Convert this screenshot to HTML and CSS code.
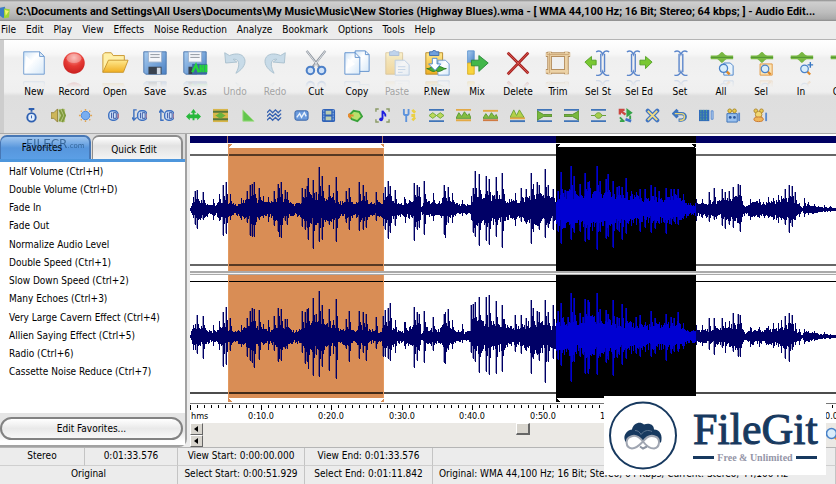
FILE: index.html
```html
<!DOCTYPE html>
<html lang="en">
<head>
<meta charset="utf-8">
<title>Audio Editor</title>
<link rel="stylesheet" href="styles.css">
</head>
<body>
<svg class="defs" aria-hidden="true">
  <defs>
    <linearGradient id="gBlue" x1="0" y1="0" x2="1" y2="1"><stop offset="0" stop-color="#a9cdf0"/><stop offset="1" stop-color="#4a80c4"/></linearGradient>
    <linearGradient id="gGold" x1="0" y1="0" x2="0" y2="1"><stop offset="0" stop-color="#ffe98e"/><stop offset="1" stop-color="#f0ae20"/></linearGradient>
    <linearGradient id="gPage" x1="0" y1="0" x2="1" y2="1"><stop offset="0" stop-color="#cfe4f8"/><stop offset=".4" stop-color="#fff"/><stop offset="1" stop-color="#d6e8f8"/></linearGradient>
    <radialGradient id="gRed" cx=".5" cy=".25" r=".8"><stop offset="0" stop-color="#f9a39c"/><stop offset=".5" stop-color="#e63a34"/><stop offset="1" stop-color="#c41c1c"/></radialGradient>
    <symbol id="floppy" viewBox="0 0 30 28">
      <path d="M3 2h24v24H5l-2-2z" fill="url(#gBlue)" stroke="#4b76ad"/>
      <path d="M8 2h14v11H8z" fill="#f5f7fa" stroke="#9fb3cc"/>
      <path d="M10 5h10M10 8h10" stroke="#8b929c"/>
      <path d="M8 18h14v8H8z" fill="#39424f"/><path d="M17 19h4v7h-4z" fill="#d4dbe4"/>
    </symbol>
    <symbol id="beam" viewBox="0 0 16 28">
      <path d="M1 2c4-2 6 0 7 3 1-3 3-5 7-3M1 27c4 1 6-1 7-4 1 3 3 5 7 4M6 4v20M10 4v20" fill="none" stroke="#5b86cb" stroke-width="1.500"/>
    </symbol>
    <symbol id="wave" viewBox="0 0 26 12">
      <path d="M1 4h6c3 0 4-3 6-4 2 1 3 4 6 4h6v4h-6c-3 0-4 3-6 4-2-1-3-4-6-4H1z" fill="#79b843"/><path d="M1 6h24" stroke="#4f9232"/>
    </symbol>
    <symbol id="lens" viewBox="0 0 16 16">
      <path d="M10 10l4 4" stroke="#e08a2c" stroke-width="3"/><circle cx="6.500" cy="6.500" r="5" fill="#d9edfb" stroke="#4a82c8" stroke-width="1.600"/>
    </symbol>
    <symbol id="clock" viewBox="0 0 16 16">
      <rect x="4" y="3" width="10" height="10" rx="4" fill="#cfe0f8" stroke="#3d70c0" stroke-width="1.500"/><path d="M7 5v6M9 5h3v6H9z" stroke="#3454a0" fill="none"/><path d="M14 6v5" stroke="#d66"/>
    </symbol>
    <symbol id="bars" viewBox="0 0 16 16">
      <path d="M0 2h16M0 14h16" stroke="#3f74b8" stroke-width="2"/>
    </symbol>
    <symbol id="clip" viewBox="0 0 30 28">
      <path d="M3 3h18v23H3z" fill="url(#gGold)" stroke="#b98b28"/><path d="M7 2h3c0-2 4-2 4 0h3v4H7z" fill="#6ea0de" stroke="#3c6cae"/>
    </symbol>
  </defs>
</svg>
<div class="app">
  <header class="titlebar">
    <svg class="app-icon" viewBox="0 0 16 16"><path d="M0 2l6-1 2 9-4 5-4-3z" fill="#3b7bc4"/><path d="M5 3l7 1-1 10-6 1z" fill="#9ed534"/><path d="M6 5l5 1-4 6z" fill="#f4f36a"/></svg>
    <h1>C:\Documents and Settings\All Users\Documents\My Music\Music\New Stories (Highway Blues).wma - [ WMA 44,100 Hz; 16 Bit; Stereo; 64 kbps; ] - Audio Edit...</h1>
  </header>
  <nav class="menubar">
    <button>File</button><button>Edit</button><button>Play</button><button>View</button><button>Effects</button><button>Noise Reduction</button><button>Analyze</button><button>Bookmark</button><button>Options</button><button>Tools</button><button>Help</button>
  </nav>
  <section class="toolbars">
    <div class="toolbar">
      <div class="group">
        <button><svg viewBox="0 0 30 28"><path d="M4 2h17l5 5v19H4z" fill="url(#gPage)" stroke="#6f9bd0"/><path d="M21 2v5h5z" fill="#e6f1fb" stroke="#6f9bd0"/><path d="M6 6l8 7-8 7z" fill="#fff"/></svg>New</button>
        <button><svg viewBox="0 0 30 28"><circle cx="15" cy="14" r="11.500" fill="url(#gRed)"/><ellipse cx="15" cy="9" rx="8" ry="5" fill="#fff" opacity=".3"/></svg>Record</button>
      </div>
      <div class="group">
        <button><svg viewBox="0 0 30 28"><path d="M2 24V5l2-2h7l2 3h12v5" fill="#fff0a8" stroke="#c8962e"/><path d="M2 24l6-13h21l-5 13z" fill="url(#gGold)" stroke="#c8962e"/></svg>Open</button>
        <button><svg viewBox="0 0 30 28"><use href="#floppy"/></svg>Save</button>
        <button><svg viewBox="0 0 30 28"><use href="#floppy"/><path d="M12 15h16v11H12z" fill="#3c66a4"/><path d="M12 24l4-8 3 8M21 16v8M24 24v-8M21 20h3M27 16v8" fill="none" stroke="#25d43a" stroke-width="2.500"/></svg>Sv.as</button>
        <button disabled><svg viewBox="0 0 30 28"><path d="M4 3l1 11 12-1-4-3c5-1 9 4 3 15 9-5 11-12 9-16C23 4 16 3 9 6z" fill="#c8dbe8" stroke="#a9bfcd"/></svg>Undo</button>
        <button disabled><svg viewBox="0 0 30 28"><path d="M26 3l-1 11-12-1 4-3c-5-1-9 4-3 15C5 20 3 13 5 9 7 4 14 3 21 6z" fill="#c8dbe8" stroke="#a9bfcd"/></svg>Redo</button>
      </div>
      <div class="group">
        <button><svg viewBox="0 0 30 28"><path d="M5 1l15 19M25 1L10 20" stroke="#8e959e" stroke-width="2.500"/><path d="M5 1l12 16M25 1L13 17" stroke="#e6e9ee"/><circle cx="9" cy="22" r="4" fill="#cfe1f7" stroke="#4d80c8" stroke-width="2.200"/><circle cx="21" cy="22" r="4" fill="#cfe1f7" stroke="#4d80c8" stroke-width="2.200"/></svg>Cut</button>
      </div>
      <div class="group">
        <button><svg viewBox="0 0 30 28"><path d="M13 1h11l4 4v18H13z" fill="url(#gPage)" stroke="#5f90cc"/><path d="M2 3h11l5 5v18H2z" fill="url(#gPage)" stroke="#5f90cc"/><path d="M13 3v5h5M24 1v4h4" fill="none" stroke="#5f90cc"/><path d="M5 9l8 6-8 5z" fill="#fff"/></svg>Copy</button>
        <button disabled><svg class="faded" viewBox="0 0 30 28"><use href="#clip"/><path d="M13 11h10l5 5v11H13z" fill="url(#gPage)" stroke="#6f9bd0"/><path d="M16 18h8M16 21h8M16 24h5" stroke="#7fa8d8"/></svg>Paste</button>
        <button><svg viewBox="0 0 30 28"><use href="#clip"/><path d="M16 11h8l4 4v12H16z" fill="url(#gPage)" stroke="#6f9bd0"/><path d="M4 20c6 0 6-5 10 0 4-5 6 0 11 0-5 1-7 5-11 2-4 3-6-1-10-2z" fill="#48ad35" stroke="#247a20"/><path d="M10 9h5v6h4l-6 7-7-7h4z" fill="#fff" stroke="#4c8bd2"/></svg>P.New</button>
        <button><svg viewBox="0 0 30 28"><path d="M5 1h7v13H5z" fill="url(#gBlue)" stroke="#5d93cf"/><path d="M5 14h7v12H5z" fill="#f8d53c" stroke="#d9ad22"/><path d="M9 11h8V6l10 8-10 9v-6H9z" fill="#42b74a" stroke="#2d8a3b"/></svg>Mix</button>
      </div>
      <div class="group">
        <button><svg viewBox="0 0 30 28"><path d="M4 3l22 22M26 3L4 26" stroke="#a52020" stroke-width="3"/><path d="M4 3l22 22M26 3L4 26" stroke="#dc5b50"/></svg>Delete</button>
        <button><svg viewBox="0 0 30 28"><path d="M2 5h26M2 23h24M6 2v24M24 2v24" stroke="#b58e5e" stroke-width="5"/><path d="M2 5h26M2 23h24M6 2v24M24 2v24" stroke="#ecd2a6" stroke-width="3"/><path d="M3 5h24M6 3v22" stroke="#c9a575"/></svg>Trim</button>
        <button><svg viewBox="0 0 30 28"><use href="#beam" x="12" width="16" height="28"/><path d="M1 13l7-6v4h5v5H8v4z" fill="#79c832" stroke="#54a125"/></svg>Sel St</button>
      </div>
      <div class="group">
        <button><svg viewBox="0 0 30 28"><use href="#beam" x="1" width="16" height="28"/><path d="M29 13l-7-6v4h-6v5h6v4z" fill="#79c832" stroke="#54a125"/></svg>Sel Ed</button>
      </div>
      <div class="group">
        <button><svg viewBox="0 0 30 28"><use href="#beam" x="8" width="16" height="28"/></svg>Set</button>
      </div>
      <div class="group">
        <button><svg viewBox="0 0 30 28"><use href="#wave" x="3" y="2" width="26" height="12"/><path d="M18 14h7l3 3v10H18z" fill="#e8f3fc" stroke="#4a82c8"/><use href="#lens" x="12" y="14" width="14" height="14"/></svg>All</button>
        <button><svg viewBox="0 0 30 28"><use href="#wave" x="3" y="2" width="26" height="12"/><path d="M14 15h13v12H14z" fill="#fbe3b3" stroke="#e09740"/><use href="#lens" x="14" y="15" width="13" height="13"/></svg>Sel</button>
        <button><svg viewBox="0 0 30 28"><use href="#wave" x="3" y="2" width="26" height="12"/><use href="#lens" x="13" y="15" width="14" height="13"/><path d="M25 13v6M22 16h6" stroke="#3a78c4" stroke-width="1.500"/></svg>In</button>
        <button><svg viewBox="0 0 30 28"><use href="#wave" x="3" y="2" width="26" height="12"/><use href="#lens" x="13" y="15" width="14" height="13"/></svg>Out</button>
      </div>
    </div>
    <div class="effects">
      <button aria-label="Timer"><svg viewBox="0 0 16 16"><path d="M8 1v3M5 1h6" stroke="#2d5fb0" stroke-width="2"/><circle cx="8" cy="10" r="4.500" fill="#e4effc" stroke="#2d5fb0" stroke-width="2"/><path d="M8 8v3" stroke="#2d5fb0"/></svg></button>
      <button aria-label="Volume"><svg viewBox="0 0 16 16"><path d="M0 5h3l4-4v14l-4-4H0z" fill="#cdb65a" stroke="#93833c"/><path d="M8 1h7v14H8z" fill="#b9c886"/><path d="M9 2l3 6-3 6M12 1l3 7-3 7" fill="none" stroke="#7f9a3c" stroke-width="2"/></svg></button>
      <button aria-label="Normalize"><svg viewBox="0 0 16 16"><circle cx="8" cy="8" r="4.500" fill="#79aef0" stroke="#4a84d4"/><path d="M8 1v2M8 13v2M1 8h2M13 8h2M3 3l1 1M12 12l1 1M13 3l-1 1M3 13l1-1" stroke="#e3a550" stroke-width="1.500"/></svg></button>
      <button aria-label="Duration"><svg viewBox="0 0 16 16"><use href="#clock"/></svg></button>
      <button aria-label="Slower"><svg viewBox="0 0 16 16"><use href="#clock" x="2"/><path d="M5 2H2v10M0 10l2 3 3-3" stroke="#3d70c0" stroke-width="1.500" fill="none"/></svg></button>
      <button aria-label="Faster"><svg viewBox="0 0 16 16"><use href="#clock" x="2"/><path d="M5 13H2V3M0 5l2-3 3 3" stroke="#3d70c0" stroke-width="1.500" fill="none"/></svg></button>
      <button aria-label="Expand"><svg viewBox="0 0 16 16"><path d="M8 1l3 4H9v2h3V5l4 4-4 4v-2H9v2H7v-2H4v2L0 9l4-4v2h3V5H5z" fill="#27b83b"/></svg></button>
      <button aria-label="Compress"><svg viewBox="0 0 16 16"><path d="M0 1h16v14H0z" fill="#d8b64a"/><path d="M0 4h16M0 12h16" stroke="#57773a" stroke-width="2"/><path d="M1 8c4 0 4-3 7-3s3 3 7 3c-4 0-4 3-7 3s-3-3-7-3z" fill="#69b23c"/></svg></button>
      <button aria-label="Fade"><svg viewBox="0 0 16 16"><path d="M3 2l12 12H3z" fill="#62c64b" stroke="#a5dd8c"/></svg></button>
      <button aria-label="Chorus"><svg viewBox="0 0 16 16"><path d="M0 5l3-3 3 3 3-3 3 3 3-3M0 9l3-3 3 3 3-3 3 3 3-3M0 13l3-3 3 3 3-3 3 3 3-3" fill="none" stroke="#3964b2" stroke-width="1.500"/></svg></button>
      <button aria-label="Flanger"><svg viewBox="0 0 16 16"><rect x="1" y="3" width="14" height="10" rx="2" fill="#6b9bdd" stroke="#315fa5"/><path d="M3 10l3-4 2 4 3-5 2 4" fill="none" stroke="#e9f2fc" stroke-width="1.500"/></svg></button>
      <button aria-label="Video"><svg viewBox="0 0 16 16"><rect x="1" y="1" width="14" height="14" rx="2" fill="#2f62b8"/><path d="M5 3h6v4H5zM5 9h6v4H5z" fill="#bccdb0"/><path d="M3 2v12M13 2v12" stroke="#9cc0ee" stroke-dasharray="2 1"/></svg></button>
      <button aria-label="Rotate"><svg viewBox="0 0 16 16"><path d="M1 8l5-5 6 1 3 5-5 5-6-2z" fill="#b8e06c" stroke="#3aa23a" stroke-width="2"/><path d="M0 8h6M2 6L0 8l3 3" stroke="#e58a30" stroke-width="2" fill="none"/></svg></button>
      <button aria-label="Pitch"><svg viewBox="0 0 16 16"><path d="M1 4V1h3M12 1h3v3M15 12v3h-3M4 15H1v-3" fill="none" stroke="#8a9a66" stroke-width="1.500"/><path d="M8 12V3c1 3 4 2 3 6" fill="none" stroke="#1d1de0" stroke-width="2"/><circle cx="6.500" cy="12" r="2" fill="#1d1de0"/></svg></button>
      <button aria-label="Tune"><svg viewBox="0 0 16 16"><path d="M2 1v5c0 2 5 2 5 0V1M4.500 7v8" fill="none" stroke="#5d93dc" stroke-width="2"/><path d="M11 2l3 3M11 13l3-3M10 8h4" stroke="#ead046" stroke-width="3"/></svg></button>
      <button aria-label="Reverb"><svg viewBox="0 0 16 16"><use href="#bars"/><path d="M0 8l4-3 4 3 4-3 4 3-4 3-4-3-4 3z" fill="#bcd85a" stroke="#6da739"/></svg></button>
      <button aria-label="Amplify"><svg viewBox="0 0 16 16"><path d="M0 2h16M0 13h16" stroke="#e3a945" stroke-width="2"/><path d="M0 11l3-6 3 4 3-5 3 4 2-2 2 5z" fill="#84bd40" stroke="#5a9933"/></svg></button>
      <button aria-label="Echo"><svg viewBox="0 0 16 16"><path d="M0 3h16" stroke="#e3a945" stroke-width="2"/><path d="M0 13h16" stroke="#d07a42" stroke-width="2"/><path d="M0 11l3-5 3 4 3-5 3 4 2-2 2 4z" fill="#84bd40" stroke="#5a9933"/></svg></button>
      <button aria-label="Tremolo"><svg viewBox="0 0 16 16"><path d="M0 10l4-8 3 6 3-6 5 8z" fill="#b3d046" stroke="#6ba336"/><path d="M0 11h16" stroke="#e3a945" stroke-width="2"/><path d="M0 14h16" stroke="#3f74b8" stroke-width="2"/></svg></button>
      <button aria-label="Fade out"><svg viewBox="0 0 16 16"><use href="#bars"/><path d="M0 3l7 4h9v2H7l-7 4z" fill="#78b83c" stroke="#578f31"/></svg></button>
      <button aria-label="Fade in"><svg viewBox="0 0 16 16"><use href="#bars"/><path d="M16 3L9 7H0v2h9l7 4z" fill="#78b83c" stroke="#578f31"/></svg></button>
      <button aria-label="Silence"><svg viewBox="0 0 16 16"><use href="#bars"/><path d="M0 8h4c2-4 6-4 8 0h4-4c-2 4-6 4-8 0z" fill="#a6cd4c" stroke="#669e38"/></svg></button>
      <button aria-label="Reverse"><svg viewBox="0 0 16 16"><path d="M7 2H2v5M3 3l5 4" stroke="#ca4740" stroke-width="2.500" fill="none"/><path d="M10 2l4 3-4 3zM13 8v4M2 10l4 4M7 14H2" stroke="#35a248" stroke-width="2" fill="#35a248"/><path d="M8 12l6 2" stroke="#3c70c8" stroke-width="3"/></svg></button>
      <button aria-label="Mix channels"><svg viewBox="0 0 16 16"><path d="M3 3l10 10M13 3L3 13" stroke="#3f74c2" stroke-width="4.500" stroke-linecap="round"/><path d="M3 3l10 10M13 3L3 13" stroke="#f0dc86" stroke-width="2"/></svg></button>
      <button aria-label="Revert"><svg viewBox="0 0 16 16"><path d="M6 2L2 6l4 4M2 6h8c6 0 5 7 0 7H7" fill="none" stroke="#3e75bf" stroke-width="3.500"/><path d="M3 6h7c5 0 4 7 0 7H8" fill="none" stroke="#e8d477" stroke-width="1.500"/></svg></button>
      <button aria-label="Equalizer"><svg viewBox="0 0 16 16"><path d="M0 2h11v12H0z" fill="#316dbb"/><path d="M2 2v12M5 2v12M8 2v12" stroke="#5aa588" stroke-dasharray="2 1"/><path d="M13 3h2v9h-2z" fill="#b9d3f2" stroke="#5a8bd0"/></svg></button>
      <button aria-label="Voice"><svg viewBox="0 0 16 16"><path d="M1 6h11v9H1z" fill="#9bc2ef" stroke="#3d72b8"/><circle cx="4" cy="3" r="2" fill="#e8c94e" stroke="#a88924"/><circle cx="9" cy="3" r="2" fill="#e8c94e" stroke="#a88924"/><circle cx="4.500" cy="10" r="1.500" fill="#2c59a0"/><circle cx="9" cy="10" r="1.500" fill="#2c59a0"/><path d="M14 5v9" stroke="#5a8bd0" stroke-width="2"/></svg></button>
      <button aria-label="Animal"><svg viewBox="0 0 16 16"><circle cx="3" cy="3" r="2" fill="#e8c94e" stroke="#b28a32"/><circle cx="9" cy="3" r="2" fill="#e8c94e" stroke="#b28a32"/><circle cx="6" cy="7" r="3.500" fill="#f2d873" stroke="#b28a32"/><ellipse cx="6" cy="12" rx="5" ry="2.500" fill="#f0b65a" stroke="#c9762e"/><path d="M14 5v9" stroke="#5a8bd0" stroke-width="2"/></svg></button>
    </div>
  </section>
  <main class="workspace">
    <aside class="sidebar">
      <div class="tabs">
        <button class="tab active">Favorites<span class="watermark" aria-hidden="true">FILECR<small>.com</small></span></button>
        <button class="tab">Quick Edit</button>
      </div>
      <ul class="favorites">
        <li>Half Volume (Ctrl+H)</li><li>Double Volume (Ctrl+D)</li><li>Fade In</li><li>Fade Out</li><li>Normalize Audio Level</li><li>Double Speed (Ctrl+1)</li><li>Slow Down Speed (Ctrl+2)</li><li>Many Echoes (Ctrl+3)</li><li>Very Large Cavern Effect (Ctrl+4)</li><li>Allien Saying Effect (Ctrl+5)</li><li>Radio (Ctrl+6)</li><li>Cassette Noise Reduce (Ctrl+7)</li>
      </ul>
      <div class="sidebar-foot"><button class="edit">Edit Favorites...</button></div>
    </aside>
    <section class="editor">
      <svg class="overview"><rect width="100%" height="7" fill="#000062"/><rect x="366" width="140" height="7"/><path d="M37.500 0v7M192.500 0v7" stroke="#a97563"/></svg>
      <svg class="tracks" id="tracks" shape-rendering="crispEdges">
        <defs>
          <clipPath id="selection"><rect x="366" width="140" height="260"/></clipPath>
        </defs>
        <path d="M38 5h156v250H38zM38 1h4l-4 4zM194 1h-4l4 4zM38 255l4 4h-4zM194 255l-4 4h4z" fill="#d98d55"/>
        <path d="M366 4h140v251H366zM366 1h5l-5 4zM506 1h-5l5 4zM366 255l5 4h-5z"/>
        <rect y="128" width="100%" height="4" fill="#a9a9a9"/><rect y="130" width="100%" height="1" fill="#f4f4f4"/>
        <rect y="11" width="100%" height="2" fill="#000" fill-opacity=".6"/><rect y="121" width="100%" height="2" fill="#000" fill-opacity=".6"/>
        <rect y="138" width="100%" height="1"/><rect y="249" width="100%" height="2" fill="#000" fill-opacity=".7"/>
        <path d="M38.500 5v123M193.500 5v123M38.500 132v123M193.500 132v123" stroke="#e3995f"/>
      </svg>
      <svg class="ruler" id="ruler" shape-rendering="crispEdges"><rect width="100%" height="1" fill="#777"/><text x="1" y="16">hms</text></svg>
      <div class="scrolls">
        <div class="scroll-rows">
          <div class="scroll"><button aria-label="Scroll left"><svg viewBox="0 0 11 10"><path d="M7 2v6L3 5z"/></svg></button><input type="range" min="0" max="1000" value="514" aria-label="Position"></div>
          <div class="scroll"><button aria-label="Zoom scroll left"><svg viewBox="0 0 11 10"><path d="M7 2v6L3 5z"/></svg></button><input type="range" min="0" max="1000" value="800" aria-label="Zoom"></div>
        </div>
        <button class="zoom" aria-label="Zoom in"><svg viewBox="0 0 16 16"><use href="#lens"/></svg></button>
      </div>
    </section>
  </main>
  <footer class="status">
    <span>Stereo</span><span>0:01:33.576</span><span>View Start: 0:00:00.000</span><span>View End: 0:01:33.576</span><span></span>
    <span class="wide">Original</span><span>Select Start: 0:00:51.929</span><span>Select End: 0:01:11.842</span><span class="info">Original: WMA 44,100 Hz; 16 Bit; Stereo; 64 Kbps; Current: Stereo; 44,100 Hz</span>
  </footer>
  <div class="badge">
    <svg viewBox="0 0 70 70"><circle cx="35" cy="35" r="33" fill="#fff" stroke="#17395f" stroke-width="2"/><path d="M18 42c-4-6 0-12 6-13 1-6 8-9 12-5 5-2 10 0 10 5 6 0 9 6 7 13z" fill="#17395f"/><path d="M27 30c3 0 5 2 6 4 3-4 7-5 11-3" fill="none" stroke="#5d7590"/><path d="M35 41c-4-5-8-7-12-5-6 2-6 11 1 12 5 0 8-4 11-7 3-4 7-7 12-5 6 2 5 11-1 12-5 0-8-3-11-7z" fill="#fff" stroke="#a0a6b2" stroke-width="2"/><path d="M32 46l3 2 4-2" fill="none" stroke="#8d95a3" stroke-width="2"/></svg>
    <div class="brand"><strong>FileGit</strong><span>Free &amp; Unlimited</span></div>
  </div>
</div>
<script src="wave.js"></script>
</body>
</html>
```
FILE: styles.css
```css
* { box-sizing: border-box; }
body { margin: 0; overflow: hidden; font: 10px/14px "DejaVu Sans Condensed", "DejaVu Sans", sans-serif; color: #000; background: #ececec; }
button { font: inherit; color: inherit; border: 0; padding: 0; background: none; white-space: nowrap; }
svg { display: block; }
.defs { position: absolute; width: 0; height: 0; }
.app { position: relative; display: flex; flex-direction: column; min-height: 100vh; }

.titlebar { display: flex; align-items: center; gap: 3px; height: 21px; padding-top: 3px; background: linear-gradient(#8c8c8c 0, #cfcfcf 2px, #bcbcbc 60%, #a9a9a9 19px, #8b8b8b); overflow: hidden; }
.app-icon { width: 13px; height: 15px; flex: none; }
h1 { margin: 0; font: bold 11px/16px Roboto, "Liberation Sans", sans-serif; white-space: nowrap; color: #000; }

.menubar { display: flex; gap: 10px; height: 19px; padding-left: 1px; background: #ececec; border-bottom: 1px solid #b4b4b4; }

.toolbars { height: 94px; padding-left: 14px; overflow: hidden; border-bottom: 1px solid #aaa;
  background: linear-gradient(90deg, #cdcdcd 4px, transparent 4px), linear-gradient(#fff 0, #f7f7f7 14px, #efefef 18px, #f1f1f1 38px, #efefef 52px, #dedede 56px, #e0e0e0 100%); }
.toolbar { display: flex; gap: 1px; width: max-content; padding-top: 9px; }
.group { display: flex; }
.toolbar button { display: flex; flex-direction: column; align-items: center; gap: 8px; width: 40px; }
.toolbar svg { width: 28px; height: 28px; flex: none; -webkit-box-reflect: below 2px linear-gradient(transparent 70%, rgba(0, 0, 0, .25)); }
.toolbar button:disabled { color: #a3a3a3; }
.faded { opacity: .4; }
.effects { display: flex; width: max-content; padding: 7px 0 0 4px; }
.effects button { display: grid; place-items: center; width: 27px; height: 18px; }
.effects svg { width: 15px; height: 15px; }

.workspace { display: flex; flex: 1; gap: 3px; }
.sidebar { display: flex; flex-direction: column; width: 187px; flex: none; border-right: 2px solid #a2a2a2; border-bottom: 2px solid #a2a2a2; border-bottom-right-radius: 8px; background: #fff; }
.tabs { display: flex; gap: 1px; height: 28px; padding: 1px 2px 0 0; background: #dcdcdc; border-bottom: 3px solid #4d96dc; }
.tab { position: relative; flex: 1; border: 1px solid #8d8d8d; border-width: 2px 2px 0 1px; border-radius: 7px 7px 0 0; background: linear-gradient(#fff, #e2e2e2 40%, #f4f4f4); padding: 4px 6px 0 0; }
.tab.active { border-color: #4777b5; background: linear-gradient(#9ec5ef, #5796dc 50%, #5b9fe6); padding-top: 0; }
.watermark { position: absolute; left: 25px; top: 0; font: 12px/14px "DejaVu Sans", sans-serif; color: #1c4b7c; opacity: .7; }
.watermark small { font-size: 7px; }
.favorites { flex: 1; margin: 0; padding: 1px 0 0 9px; list-style: none; }
.favorites li { line-height: 18px; white-space: nowrap; }
.favorites li:nth-child(4n) { margin-bottom: 1px; }
.sidebar-foot { padding: 4px 2px 5px 0; background: linear-gradient(#e5e5e5 18px, #fff 28px); }
.edit { display: block; width: 100%; height: 23px; border: 2px solid #828282; border-radius: 12px; background: linear-gradient(#fff, #e9e9e9 50%, #f8f8f8); }

.editor { display: flex; flex-direction: column; flex: 1; min-width: 0; padding-top: 2px; background: #fff; }
.overview, .tracks, .ruler { width: 100%; flex: none; overflow: hidden; }
.overview { height: 7px; }
.tracks { height: 260px; }
.ruler { height: 20px; }
.ruler text { font-size: 9px; fill: #000; }
.scrolls { display: flex; flex: 1; background: #ebe9e5; }
.scroll-rows { display: flex; flex-direction: column; flex: 1; }
.scroll { display: flex; flex: 1; }
.scroll button { width: 13px; height: 12px; background: #d8d5ce; border: 1px solid #666; border-color: #fff #666 #666 #fff; }
.scroll input { flex: 1; height: 12px; margin: 0; appearance: none; background: none; }
.scroll input::-webkit-slider-thumb { appearance: none; width: 14px; height: 12px; background: #d8d5ce; border: 1px solid #666; border-color: #fff #666 #666 #fff; border-width: 1px 2px 2px 1px; }
.zoom { width: 11px; overflow: hidden; }
.zoom svg { width: 16px; height: 16px; }

.status { display: grid; grid-template-columns: 85px 93px 127px 128px 1fr; grid-auto-rows: 18px; height: 38px; border-top: 1px solid #b5b5b5; background: #ececec; overflow: hidden; }
.status span { text-align: center; line-height: 16px; white-space: nowrap; border-right: 1px solid #c4c4c4; border-bottom: 1px solid #cfcfcf; }
.status .wide { grid-column: span 2; }
.status span:nth-child(n+6) { border-bottom: 0; }
.status .info { text-align: left; padding-left: 6px; }

.badge { position: absolute; right: 10px; bottom: 10px; display: flex; align-items: center; gap: 15px; padding: 4px 9px 4px 4px; background: #fff; }
.badge svg { width: 70px; height: 71px; }
.brand { color: #17395f; width: 124px; font-family: "Liberation Serif", serif; }
.brand strong { display: block; font-size: 44px; line-height: 44px; font-weight: normal; -webkit-text-stroke: 1px #17395f; }
.brand span { display: flex; align-items: center; gap: 3px; font-size: 10px; line-height: 12px; font-weight: bold; color: #9596a8; white-space: nowrap; }
.brand span::before, .brand span::after { content: ""; flex: 1; height: 3px; background: #17395f; }
```
FILE: wave.js
```js
const NS = "http://www.w3.org/2000/svg";
const tracks = document.getElementById("tracks");
const ruler = document.getElementById("ruler");

// Half height of the solid body of the signal: x, height
const body = [0,1, 2,8, 12,9, 20,5, 26,5, 32,11, 38,6, 46,5, 56,9, 64,12, 72,8, 80,6, 86,11, 92,10, 104,5, 112,8, 118,14, 130,13, 140,11, 150,7, 160,9, 164,5, 170,11, 180,6, 190,6, 196,12, 204,8, 212,5, 222,10, 228,12, 231,3, 236,9, 248,6, 254,12, 262,7, 272,4, 280,5, 284,16, 300,13, 310,13, 320,9, 330,9, 340,15, 352,15, 364,10, 370,16, 380,18, 388,14, 398,20, 410,16, 418,17, 430,12, 445,13, 455,11, 465,12, 475,12, 488,13, 494,8, 500,5, 510,6, 530,8, 545,12, 551,12, 555,3, 560,7, 575,7, 590,9, 600,12, 607,6, 612,1, 614,5, 622,4, 630,2, 646,1];

// Peaks: x, left channel up and down, right channel up and down
const peaks = [
  [3,12,8,11,13],[5,18,15,12,13],[7,19,19,21,17],[13,17,10,20,22],[23,10,10,11,9],[29,15,11,15,13],[33,24,26,24,30],[36,27,24,29,28],
  [40,15,10,18,14],[51,11,10,11,10],[57,18,13,18,20],[60,24,26,25,24],[62,25,27,28,26],[64,27,27,27,31],[69,21,10,26,23],[73,13,8,12,8],[78,12,12,16,13],
  [84,18,16,20,14],[88,25,22,28,25],[89,21,27,20,22],[91,27,28,27,24],[95,19,11,17,12],[97,17,15,17,12],[112,21,17,25,16],[115,20,20,24,27],[117,23,18,27,25],
  [118,31,30,28,32],[123,29,39,38,39],[126,17,15,22,18],[129,42,32,45,40],[132,33,30,31,30],[139,24,15,27,34],[143,16,19,16,17],[146,32,32,37,42],
  [156,18,13,17,12],[159,21,20,25,25],[169,27,21,25,22],[173,24,20,24,16],[176,17,18,22,24],[186,17,11,19,12],[193,16,16,20,20],[195,22,20,26,20],[198,28,29,28,22],[200,23,23,33,24],[205,19,16,16,16],[214,12,7,14,9],
  [215,10,13,14,12],[224,26,31,29,31],[227,24,20,24,24],[229,22,18,22,14],[234,28,25,25,26],[243,16,11,19,14],[254,24,25,22,26],[255,18,28,24,27],[258,22,13,27,13],[262,16,13,16,12],[272,9,6,12,6],
  [281,13,10,31,16],[283,21,23,32,22],[285,38,27,34,25],[289,35,36,39,36],[296,33,31,39,35],[299,30,35,41,38],[306,32,27,35,37],[312,36,38,31,35],[314,15,11,17,13],[325,16,16,21,15],[331,21,12,21,17],[336,20,13,18,14],
  [341,36,34,36,37],[343,25,22,28,22],[347,27,15,25,18],[349,24,20,24,24],[355,40,28,36,46],[358,24,18,24,25],[363,20,20,31,22],[368,18,22,25,23],
  [371,37,34,33,29],[381,43,30,43,45],[384,33,23,38,25],[390,25,22,23,20],[395,36,32,37,37],[398,27,30,36,37],[399,28,30,34,32],[407,43,40,43,38],[410,28,22,27,20],[416,30,29,26,26],[418,35,27,22,23],[423,28,38,36,39],[427,22,20,19,21],
  [429,23,22,18,18],[432,22,30,32,28],[436,31,24,28,22],[441,18,16,14,17],[446,17,15,19,17],[450,20,22,21,20],[455,20,18,14,15],[461,24,23,25,20],[465,22,19,18,17],[469,18,12,14,13],[476,21,24,22,24],[481,20,15,19,17],[484,20,12,18,15],[488,20,15,24,15],[493,15,9,13,12],
  [506,10,11,11,8],[512,10,8,11,9],[519,17,12,18,13],[524,21,10,18,18],[532,20,16,18,11],[535,17,19,14,16],[539,18,15,15,10],[543,22,18,23,15],[548,25,13,22,20],[550,24,22,21,20],
  [560,10,10,9,10],[569,10,8,9,10],[578,12,8,10,8],[583,11,10,13,11],[588,14,13,13,10],[591,13,10,16,16],[595,20,15,20,22],[599,24,23,23,25],[602,23,17,21,13],[605,17,10,13,8],[609,6,7,7,8],[614,11,7,7,7],[618,7,5,5,4],[624,5,3,5,4],[634,4,2,4,2],[640,3,2,2,2]
];

function bodyAt(x) {
  let i = 0;
  while (i < body.length - 4 && body[i + 2] <= x) i += 2;
  const t = Math.min(1, (x - body[i]) / (body[i + 2] - body[i]));
  return body[i + 1] + (body[i + 3] - body[i + 1]) * t;
}

function noise(n) {
  const v = Math.sin(n * 12.9898) * 43758.5453;
  return v - Math.floor(v);
}

function add(parent, name, attributes) {
  const node = document.createElementNS(NS, name);
  for (const key in attributes) node.setAttribute(key, attributes[key]);
  parent.append(node);
  return node;
}

function channel(centre, column) {
  const up = [], down = [];
  for (let x = 0; x < 646; x++) {
    const b = bodyAt(x);
    up[x] = b * (0.55 + 0.6 * noise(x + centre));
    down[x] = b * (0.55 + 0.6 * noise(x * 3 + centre));
  }
  for (const p of peaks) {
    const x = p[0];
    up[x] = Math.max(up[x], p[column]);
    down[x] = Math.max(down[x], p[column + 1]);
    up[x + 1] = Math.max(up[x + 1], p[column] * 0.55);
    down[x + 1] = Math.max(down[x + 1], p[column + 1] * 0.55);
  }
  let solid = "", edge = "";
  for (let x = 0; x < 646; x++) {
    const u = Math.round(up[x]), d = Math.round(down[x]);
    solid += `M${x} ${centre - u}h1v${u + d + 1}h-1z`;
    if (x && u > 16 && u - up[x - 1] > 6) {
      edge += `M${x - 1} ${centre - u}h1v${u + d}h-1z`;
    }
  }
  add(tracks, "path", { d: edge, fill: "#000066", "fill-opacity": 0.4 });
  add(tracks, "path", { d: solid, fill: "#000066" });
  const chosen = add(tracks, "g", { "clip-path": "url(#selection)" });
  add(chosen, "path", { d: edge, fill: "#000090" });
  add(chosen, "path", { d: solid, fill: "#0000d2" });
}

channel(66, 1);
channel(193, 3);

// One tick per second, one label per ten seconds
for (let s = 0; s < 200; s++) {
  const x = Math.round(s * 7.05);
  add(ruler, "rect", { x, y: 2, width: 1, height: s % 10 ? 3 : 5 });
  if (s && s % 10 === 0) {
    const label = add(ruler, "text", { x, y: 16, "text-anchor": "middle" });
    label.textContent = `${Math.floor(s / 60)}:${String(s % 60).padStart(2, "0")}.0`;
  }
}
```
